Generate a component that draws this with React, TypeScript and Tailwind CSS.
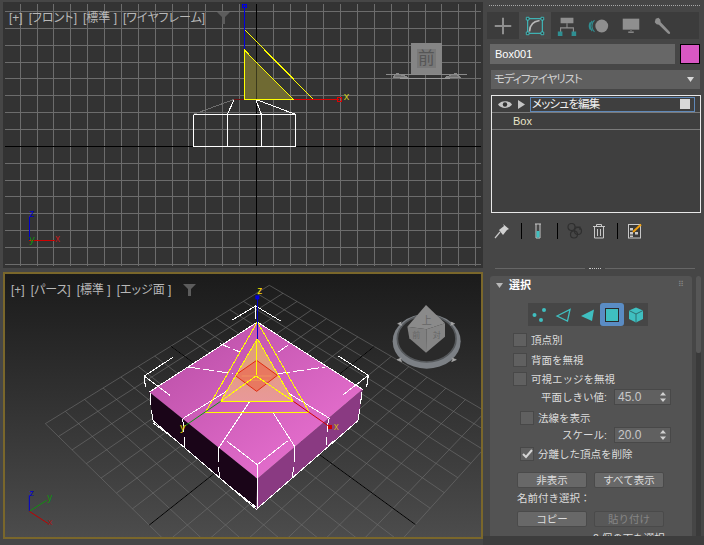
import React from "react";

/* ============== viewport helpers ============== */

// 前ビューのグリッド位置 (SVG は参照画像の 3 倍座標)
const STEP = 50.6;
const frontXs = Array.from({ length: 29 }, (_, i) => 769 + (i - 14) * STEP).filter((x) => x > 15 && x < 1443);
const frontYs = Array.from({ length: 17 }, (_, i) => 439 + (i - 8) * STEP).filter((y) => y > 12 && y < 798);

// パースのグリッド: 四隅から射影変換
const [x0, y0, x1, y1, x2, y2, x3, y3] = [808, 40, 1520, 455, 871, 1173, 136, 455];
const sx = x0 - x1 + x2 - x3;
const sy = y0 - y1 + y2 - y3;
const dx1 = x1 - x2;
const dx2 = x3 - x2;
const dy1 = y1 - y2;
const dy2 = y3 - y2;
const den = dx1 * dy2 - dx2 * dy1;
const g = (sx * dy2 - dx2 * sy) / den;
const h = (dx1 * sy - sx * dy1) / den;
const project = (u: number, v: number) => {
  const w = g * u + h * v + 1;
  return [
    ((x1 - x0 + g * x1) * u + (x3 - x0 + h * x3) * v + x0) / w,
    ((y1 - y0 + g * y1) * u + (y3 - y0 + h * y3) * v + y0) / w,
  ];
};
const seg = (a: number[], b: number[]) => `M${a[0]},${a[1]}L${b[0]},${b[1]}`;
const CELLS = 14;
const gridPath = Array.from({ length: CELLS + 1 }, (_, i) => i / CELLS)
  .map((t) => seg(project(t, 0), project(t, 1)) + seg(project(0, t), project(1, t)))
  .join("");
const axisPath = seg(project(0.5, 0), project(0.5, 1)) + seg(project(0, 0.5), project(1, 0.5));

const TXT = "Liberation Sans, sans-serif";

function ViewLabels({ items }: { items: string[] }) {
  return (
    <div className="absolute left-[6px] top-[9px] flex items-center gap-[6px] text-[12px] leading-[14px] text-[#b8b8b8] [font-feature-settings:'palt']">
      {items.map((t) => (
        <span key={t}>{t}</span>
      ))}
      <svg width="13" height="12" viewBox="0 0 13 12" className="ml-[6px]">
        <path d="M0,0H13L8,5V12H5V5Z" fill="#5c5c5c" />
      </svg>
    </div>
  );
}

function FrontViewport() {
  return (
    <div className="relative ml-[3px] mt-[2px] h-[266px] w-[480px] bg-[#333333]">
      <svg viewBox="9 6 1440 798" className="block h-full w-full" shapeRendering="crispEdges">
        <g stroke="#6c6c6c" strokeWidth="3">
          {frontXs.map((x) => (
            <line key={x} x1={x} x2={x} y1={12} y2={798} />
          ))}
          {frontYs.map((y) => (
            <line key={y} x1={15} x2={1443} y1={y} y2={y} />
          ))}
        </g>
        <g stroke="#000" strokeWidth="3">
          <line x1={15} x2={1443} y1={439} y2={439} />
          <line x1={769} x2={769} y1={12} y2={798} />
        </g>
        {/* ボックス */}
        <g stroke="#fff" strokeWidth="3" fill="none">
          <rect x={580} y={343} width={306} height={96} />
          <line x1={682} x2={682} y1={343} y2={439} />
          <line x1={784} x2={784} y1={343} y2={439} />
          <path d="M682,343L703,298M784,343L767,298M886,343L767,298" />
        </g>
        <path d="M580,343L703,298" stroke="#6e6e6e" strokeWidth="3" fill="none" />
        {/* 選択面とギズモ */}
        <path d="M733,150V298H880Z" fill="#6f6a33" />
        <line x1={769} x2={769} y1={186} y2={298} stroke="#3b3a1c" strokeWidth="3" />
        <path d="M733,12V150" stroke="#0000e0" strokeWidth="3" />
        <path d="M703,298H733" stroke="#6b1010" strokeWidth="3" />
        <path d="M880,298H1018" stroke="#e00000" strokeWidth="4" fill="none" />
        <path d="M733,150V298H880Z" fill="none" stroke="#ffff00" strokeWidth="3" />
        <path d="M735,90L940,298" stroke="#ffff00" strokeWidth="3" fill="none" />
        <rect x={1012} y={292} width={12} height={12} fill="none" stroke="#e00000" strokeWidth="3" />
        <text x={1031} y={300} fontSize="33" fill="#c8c820" fontFamily={TXT}>x</text>
        <rect x={726} y={12} width={14} height={9} fill="none" stroke="#0000e0" strokeWidth="3" />
        {/* 三軸 */}
        <path d="M88,720V650" stroke="#0000d0" strokeWidth="3" />
        <path d="M88,720H165" stroke="#d00000" strokeWidth="3" />
        <text x={88} y={652} fontSize="30" fill="#0000d0" fontFamily={TXT}>z</text>
        <text x={88} y={728} fontSize="33" fill="#109010" fontFamily={TXT}>y</text>
        <text x={165} y={726} fontSize="30" fill="#c01818" fontFamily={TXT}>x</text>
        {/* ViewCube */}
        <path d="M1158,224H1400M1190,220L1225,232H1180ZM1368,220L1335,232H1380Z" stroke="#8a8a8a" strokeWidth="3" fill="#6f6f6f" />
        <path d="M1200,234H1350" stroke="#9a9a9a" strokeWidth="3" />
        <rect x={1233} y={130} width={92} height={92} fill="#858585" />
        <rect x={1250} y={147} width={58} height={58} fill="#787878" />
        <text x={1279} y={193} textAnchor="middle" fontSize="50" fill="#565656" fontFamily="Noto Sans CJK JP, sans-serif">前</text>
      </svg>
      <ViewLabels items={["[+]", "[フロント]", "[標準 ]", "[ワイヤフレーム]"]} />
    </div>
  );
}

function PerspViewport() {
  return (
    <div className="relative ml-[3px] mt-[4px] h-[267px] w-[480px] border-2 border-[#7a672b] bg-linear-to-b from-[#1b1b1b] to-[#4c4c4c]">
      <svg viewBox="15 6 1428 789" className="block h-full w-full">
        <defs>
          <linearGradient id="topFace" x1="0.1" y1="0.1" x2="0.9" y2="0.9">
            <stop offset="0" stopColor="#bb50a8" />
            <stop offset="1" stopColor="#ea72d2" />
          </linearGradient>
          <linearGradient id="selFace" x1="0" y1="0" x2="0" y2="1">
            <stop offset="0" stopColor="#e0a070" />
            <stop offset="1" stopColor="#e8989a" />
          </linearGradient>
        </defs>
        <path d={gridPath} stroke="#707070" strokeWidth="2.5" fill="none" opacity="0.75" />
        <path d={axisPath} stroke="#000" strokeWidth="3" fill="none" />

        {/* ボックス */}
        <path d="M448,360L772,620L769,712L458,445Z" fill="#1a0518" />
        <path d="M1088,352L772,620L769,712L1075,445Z" fill="#8a3a82" />
        <path d="M772,150L448,360L772,620L1088,352Z" fill="url(#topFace)" />
        <g stroke="#fff" strokeWidth="3" fill="none" shapeRendering="crispEdges">
          <path d="M772,150L448,360M772,150L1088,352" />
          <path d="M458,445L769,712L1075,445M772,620V712" />
          <path d="M685,640L769,706M1000,508L985,522M535,510L458,452" />
          <path d="M450,362L453,400M455,415L458,445M1085,360L1082,395M1079,410L1075,445" />
          <path d="M548,440L552,480M553,495L555,525M655,530V570M656,585L658,615M885,525L882,570M880,585L878,615M985,440L982,480M980,495L978,520" />
          {/* 面の分割線 */}
          <path d="M660,215L720,240M835,240L870,215M565,285L700,305M835,305L975,285" strokeDasharray="34 10" />
          <path d="M768,360L655,530M818,420L885,525M700,345L548,440M835,345L990,440" />
          {/* コーナー */}
          <path d="M695,145L767,102L842,147M767,100V140" />
          <path d="M520,255L433,312L510,370M433,312L436,345" />
          <path d="M1015,252L1105,310L1030,368M1105,310L1100,345" />
          <path d="M680,507L772,578L862,507M772,578V620" />
        </g>

        {/* 選択面 */}
        <path d="M772,200L662,388H880Z" fill="url(#selFace)" />
        <path d="M770,265L832,310L770,358L705,310Z" fill="#e87860" stroke="#e02a10" strokeWidth="3" />
        <path d="M725,312H815M735,325H805" stroke="#f09060" strokeWidth="3" />
        <g shapeRendering="crispEdges" fill="none" stroke="#ffff00" strokeWidth="3">
          <path d="M772,150L616,421H928Z" />
          <path d="M772,200L662,388H880ZM768,312L662,388M768,312L880,388M768,312L770,200" />
        </g>

        {/* ギズモ */}
        <path d="M772,75V200" stroke="#0000c8" strokeWidth="3" shapeRendering="crispEdges" />
        <rect x={766} y={70} width={12} height={12} fill="#0000e0" />
        <path d="M662,388L550,465" stroke="#0e9a0e" strokeWidth="3" />
        <path d="M880,388L990,465" stroke="#d00000" strokeWidth="3" />
        <rect x={984} y={459} width={12} height={12} fill="#d00000" />
        <text x={772} y={66} fontSize="30" fill="#ffe000" fontFamily={TXT}>z</text>
        <text x={540} y={476} fontSize="33" fill="#e0d000" fontFamily={TXT}>y</text>
        <text x={1001} y={474} fontSize="30" fill="#d0b020" fontFamily={TXT}>x</text>

        {/* 三軸 */}
        <path d="M88,718V670" stroke="#0000d0" strokeWidth="3" />
        <path d="M88,718L140,685" stroke="#109010" strokeWidth="3" />
        <path d="M88,718L145,755" stroke="#c00000" strokeWidth="3" />
        <text x={88} y={672} fontSize="28" fill="#0000d0" fontFamily={TXT}>z</text>
        <text x={142} y={686} fontSize="30" fill="#109010" fontFamily={TXT}>y</text>
        <text x={143} y={760} fontSize="28" fill="#a01818" fontFamily={TXT}>x</text>

        {/* ViewCube */}
        <ellipse cx={1280} cy={208} rx={102} ry={82} fill="#7c8085" />
        <ellipse cx={1280} cy={200} rx={88} ry={70} fill="#2a2a2a" stroke="#55585b" strokeWidth="5" />
        <path d="M1205,150l-12,5l12,5l-5,-10M1352,150l12,5l-12,5l5,-10M1205,258l-14,5l14,6l-5,-11M1355,258l14,5l-14,6l5,-11" fill="#a8a8a8" stroke="#a8a8a8" strokeWidth="2" />
        <path d="M1278,99L1222,164L1280,172L1335,154Z" fill="#8a8a8a" />
        <path d="M1222,164L1228,199L1278,242L1280,172Z" fill="#808080" />
        <path d="M1335,154L1335,194L1278,242L1280,172Z" fill="#858585" />
        <text x={1280} y={156} textAnchor="middle" fontSize="30" fill="#666666" fontFamily="Noto Sans CJK JP, sans-serif">上</text>
        <text x={1249} y={198} textAnchor="middle" fontSize="24" fill="#666666" fontFamily="Noto Sans CJK JP, sans-serif">前</text>
        <text x={1310} y={198} textAnchor="middle" fontSize="24" fill="#666666" fontFamily="Noto Sans CJK JP, sans-serif">対</text>
      </svg>
      <ViewLabels items={["[+]", "[パース]", "[標準 ]", "[エッジ面 ]"]} />
    </div>
  );
}

/* ============== コマンドパネル ============== */

const TEAL = "#3fbfc0";
const GREY = "#8f8f8f";

const tabIcons = [
  <path key="c" d="M12,3V21M3,12H21" stroke={GREY} strokeWidth="2.2" fill="none" />,
  <g key="m">
    <rect x="4" y="4" width="16" height="16" fill="none" stroke={TEAL} strokeWidth="1.2" />
    <path d="M2.5,2.5h3v3h-3zM18.5,2.5h3v3h-3zM2.5,18.5h3v3h-3zM18.5,18.5h3v3h-3z" fill="#333" stroke={TEAL} strokeWidth="1" />
    <path d="M6,18C6,11 10,7 17,6" fill="none" stroke="#b8b8b8" strokeWidth="1.8" />
  </g>,
  <g key="h">
    <rect x="5" y="3" width="14" height="6" fill={GREY} />
    <path d="M12,9V14M5,19V14H19V19" fill="none" stroke={GREY} strokeWidth="1.2" />
    <path d="M2,18h5v5h-5zM17,18h5v5h-5z" fill="#2f8f92" />
  </g>,
  <g key="a">
    <circle cx="15" cy="12" r="7" fill={GREY} />
    <path d="M7,5.5A9,9 0 0 0 7,18.5M4.5,6.5A9,9 0 0 0 4.5,17.5M2.5,8A8,8 0 0 0 2.5,16" fill="none" stroke="#2f8f92" strokeWidth="1.2" />
  </g>,
  <g key="d">
    <rect x="3" y="4" width="18" height="12" fill={GREY} />
    <rect x="9" y="18" width="6" height="1.5" fill={GREY} />
    <rect x="11" y="16" width="2" height="2" fill="#666" />
  </g>,
  <path key="u" d="M4,4L7,3L9,5L9.5,8L19,18C21,20 19,22 17,20L7.5,10.5L5,10L3,8Z" fill={GREY} />,
];

function SubIcon({ i }: { i: number }) {
  if (i === 0)
    return (
      <svg width="18" height="18" viewBox="0 0 18 18" fill={TEAL}>
        <circle cx="3.5" cy="9" r="2" />
        <circle cx="13" cy="4" r="2" />
        <circle cx="10" cy="14" r="2" />
      </svg>
    );
  if (i === 1)
    return (
      <svg width="18" height="18" viewBox="0 0 18 18">
        <path d="M2,10L15,3.5L12.5,15Z" fill="none" stroke={TEAL} strokeWidth="1.3" />
      </svg>
    );
  if (i === 2)
    return (
      <svg width="18" height="18" viewBox="0 0 18 18">
        <path d="M2,10L15,3.5L13,15Z" fill={TEAL} />
      </svg>
    );
  if (i === 3)
    return (
      <span className="block h-[14px] w-[14px] border border-[#2a2a2a] bg-[#3fbfc0]" />
    );
  return (
    <svg width="18" height="18" viewBox="0 0 18 18">
      <path d="M9,1.5L16,4.5V13L9,16.5L2,13V4.5Z" fill={TEAL} />
      <path d="M2,4.5L9,8L16,4.5M9,8V16.5" fill="none" stroke="#2f6f70" strokeWidth="1" />
    </svg>
  );
}

function Check({ label, x, checked, top }: { label: string; x: string; checked?: boolean; top: string }) {
  return (
    <div className={`flex h-[14px] items-center ${x} ${top}`}>
      <span className="flex h-[14px] w-[14px] items-center justify-center border border-[#484848] bg-[#606060]">
        {checked && (
          <svg width="11" height="10" viewBox="0 0 11 10">
            <path d="M1,5L4,8L10,1" fill="none" stroke="#d4d4d4" strokeWidth="2" />
          </svg>
        )}
      </span>
      <span className="ml-[4px] whitespace-nowrap text-[#dcdcdc]">{label}</span>
    </div>
  );
}

function Spinner({ label, value, top }: { label: string; value: string; top: string }) {
  return (
    <div className={`flex h-[16px] items-center ${top}`}>
      <span className="w-[117px] whitespace-nowrap text-right text-[#dcdcdc]">{label}</span>
      <div className="ml-[7px] flex h-[16px] w-[57px] items-center justify-between border border-[#484848] bg-[#606060] pl-[3px] pr-[4px]">
        <span className="font-['Liberation_Sans'] text-[12px] text-[#c8c8c8]">{value}</span>
        <svg width="6" height="10" viewBox="0 0 6 10" fill="#d0d0d0">
          <path d="M3,0L6,3.5H0ZM3,10L0,6.5H6Z" />
        </svg>
      </div>
    </div>
  );
}

function Btn({ label, disabled }: { label: string; disabled?: boolean }) {
  return (
    <span
      className={`flex h-[16px] w-[70px] items-center justify-center rounded-[2px] border border-[#4a4a4a] ${
        disabled ? "bg-[#585858] text-[#868686]" : "bg-[#686868] text-[#dcdcdc]"
      }`}
    >
      {label}
    </span>
  );
}

function CommandPanel() {
  return (
    <div className="flex h-full w-[217px] flex-col">
      <div className="ml-[2px] mt-[5px] h-[1px] w-[211px] border-t border-dotted border-[#a8a8a8]" />
      {/* タブ */}
      <div className="mt-[6px] flex h-[27px] w-[212px] bg-[#3c3c3c]">
        {tabIcons.map((icon, i) => (
          <div
            key={i}
            className={`flex h-[27px] w-[32px] items-center justify-center ${i === 1 ? "bg-[#4a4a4a]" : ""}`}
          >
            <svg width="22" height="22" viewBox="0 0 24 24">
              {icon}
            </svg>
          </div>
        ))}
      </div>
      {/* 名前 */}
      <div className="ml-[3px] mt-[5px] flex h-[20px]">
        <div className="flex w-[185px] items-center bg-[#676767] pl-[5px] font-['Liberation_Sans'] text-[11px] text-white">
          Box001
        </div>
        <div className="ml-[5px] h-[20px] w-[20px] border border-black bg-[#d957c4]" />
      </div>
      {/* モディファイヤリスト */}
      <div className="ml-[4px] mt-[6px] flex h-[19px] w-[209px] items-center justify-between bg-[#5f5f5f] pl-[3px] pr-[6px] text-[11.5px] tracking-[-1px] text-[#d0d0d0] [font-feature-settings:'palt']">
        <span>モディファイヤリスト</span>
        <svg width="7" height="5" viewBox="0 0 7 5" fill="#d8d8d8">
          <path d="M0,0H7L3.5,5Z" />
        </svg>
      </div>
      {/* スタック */}
      <div className="ml-[4px] mt-[6px] h-[118px] w-[210px] border-[1.5px] border-[#e8e8e8] bg-[#3f3f3f]">
        <div className="flex h-[17px] items-center border-b border-[#7a7a7a]">
          <svg width="14" height="9" viewBox="0 0 14 9" className="ml-[6px]">
            <path d="M0,4.5C3,0 11,0 14,4.5C11,9 3,9 0,4.5Z" fill="#c4c4c4" />
            <circle cx="7" cy="4.5" r="2.2" fill="#333" />
          </svg>
          <svg width="7" height="9" viewBox="0 0 7 9" className="ml-[6px]" fill="#c4c4c4">
            <path d="M0,0L7,4.5L0,9Z" />
          </svg>
          <div className="ml-[5px] flex h-[15px] w-[165px] items-center justify-between border border-[#5f88b8] pl-[1px] pr-[4px] pt-[2px] text-[11.5px] tracking-[-0.8px] text-[#f0f0f0] [font-feature-settings:'palt']">
            <span>メッシュを編集</span>
            <span className="mb-[2px] h-[10px] w-[10px] bg-[#d8d8d8]" />
          </div>
        </div>
        <div className="flex h-[17px] items-center border-b border-[#7a7a7a] pl-[21px] pt-[1px] font-['Liberation_Sans'] text-[11px] text-[#e8e4c8]">
          Box
        </div>
      </div>
      {/* スタックツールバー */}
      <div className="mt-[10px] flex h-[16px] items-center">
        <svg width="16" height="16" viewBox="0 0 16 16" className="ml-[7px]">
          <path d="M1,15L6,9" stroke="#c8c8c8" strokeWidth="1.2" />
          <path d="M5,7L10,3L9,1L15,6L13,7L9,12Z" fill="#d0d0d0" />
        </svg>
        <span className="ml-[11px] h-[16px] w-[1px] bg-black" />
        <svg width="16" height="16" viewBox="0 0 16 16" className="ml-[8px]">
          <path d="M5,1H11M6,1V15H10V1" fill="none" stroke="#c8c8c8" />
          <rect x="6.5" y="8" width="3" height="6.5" fill={TEAL} />
        </svg>
        <span className="ml-[11px] h-[16px] w-[1px] bg-black" />
        <svg width="16" height="16" viewBox="0 0 16 16" className="ml-[9px]" fill="none" stroke="#2f2f2f" strokeWidth="1.2">
          <circle cx="4.5" cy="4" r="3.5" />
          <circle cx="7" cy="11.5" r="3.5" />
          <circle cx="11" cy="8" r="3.5" />
          <path d="M8,4H13V7" />
        </svg>
        <svg width="16" height="16" viewBox="0 0 16 16" className="ml-[8px]" fill="none" stroke="#c8c8c8">
          <path d="M2,3.5H14M5.5,3V1.5H10.5V3M3.5,4V15H12.5V4M6.5,6V13M9.5,6V13" />
        </svg>
        <span className="ml-[10px] h-[16px] w-[1px] bg-black" />
        <svg width="16" height="16" viewBox="0 0 16 16" className="ml-[9px]">
          <rect x="1.5" y="1.5" width="12" height="13.5" fill="#3a3a3a" stroke="#c8c8c8" />
          <path d="M3,5h3v2.500h-3zM8,9h3v2.500h-3zM3,9h3v2.500h-3zM3,12.500h3v1.500h-3z" fill="#c8c8c8" />
          <path d="M6,9L14,1.500" stroke="#f0a010" strokeWidth="2" />
        </svg>
      </div>
      {/* 区切り */}
      <div className="mt-[28px] flex h-[2px] items-center">
        <span className="ml-[8px] h-[1px] w-[90px] bg-[#666666]" />
        <span className="ml-[4px] h-[1px] w-[12px] border-t border-dotted border-[#c8c8c8]" />
        <span className="ml-[4px] h-[1px] w-[90px] bg-[#666666]" />
      </div>
      {/* ロールアウト */}
      <div className="mt-[7px] flex">
        <div className="ml-[3px] h-[260px] w-[202px] overflow-hidden rounded-t-[3px] bg-[#535353] text-[10.5px] leading-[14px]">
          <div className="flex h-[18px] items-center">
            <svg width="7" height="5" viewBox="0 0 7 5" fill="#b8b8b8" className="ml-[6px]">
              <path d="M0,0H7L3.5,5Z" />
            </svg>
            <span className="ml-[6px] text-[11px] font-bold text-white">選択</span>
            <span className="ml-[147px] text-[#888] text-[8px] leading-[8px] tracking-[-1px]">⠿</span>
          </div>
          <div className="ml-[38px] mt-[9px] flex h-[23px] w-[120px] bg-[#464646]">
            {[0, 1, 2, 3, 4].map((i) => (
              <div
                key={i}
                className={`flex h-[23px] w-[24px] items-center justify-center ${i === 3 ? "rounded-[3px] bg-[#5a8cc4]" : ""}`}
              >
                <SubIcon i={i} />
              </div>
            ))}
          </div>
          <Check label="頂点別" x="ml-[23px]" top="mt-[7px]" />
          <Check label="背面を無視" x="ml-[23px]" top="mt-[6px]" />
          <Check label="可視エッジを無視" x="ml-[23px]" top="mt-[5px]" />
          <Spinner label="平面しきい値:" value="45.0" top="mt-[3px]" />
          <Check label="法線を表示" x="ml-[30px]" top="mt-[6px]" />
          <Spinner label="スケール:" value="20.0" top="mt-[2px]" />
          <Check label="分離した頂点を削除" x="ml-[30px]" checked top="mt-[4px]" />
          <div className="ml-[27px] mt-[11px] flex gap-[7px]">
            <Btn label="非表示" />
            <Btn label="すべて表示" />
          </div>
          <div className="ml-[27px] mt-[3px] h-[14px] text-[#dcdcdc]">名前付き選択：</div>
          <div className="ml-[27px] mt-[6px] flex gap-[7px]">
            <Btn label="コピー" />
            <Btn label="貼り付け" disabled />
          </div>
          <div className="ml-[103px] mt-[4px] whitespace-nowrap text-[#dcdcdc]">2 個の面を選択</div>
        </div>
        <div className="ml-[4px] h-[260px] w-[5px] rounded-t-[2px] bg-[#3a3a3a]">
          <div className="h-[77px] rounded-[2px] bg-[#565656]" />
        </div>
      </div>
      <div className="mt-0 flex-1 -ml-[4px] bg-[#3d3d3d]" />
    </div>
  );
}

export default function App() {
  return (
    <div className="flex h-[545px] w-[704px] overflow-hidden bg-[#464646] font-['Liberation_Sans','Noto_Sans_CJK_JP',sans-serif]">
      <div className="h-full w-[487px]">
        <FrontViewport />
        <PerspViewport />
      </div>
      <CommandPanel />
    </div>
  );
}
